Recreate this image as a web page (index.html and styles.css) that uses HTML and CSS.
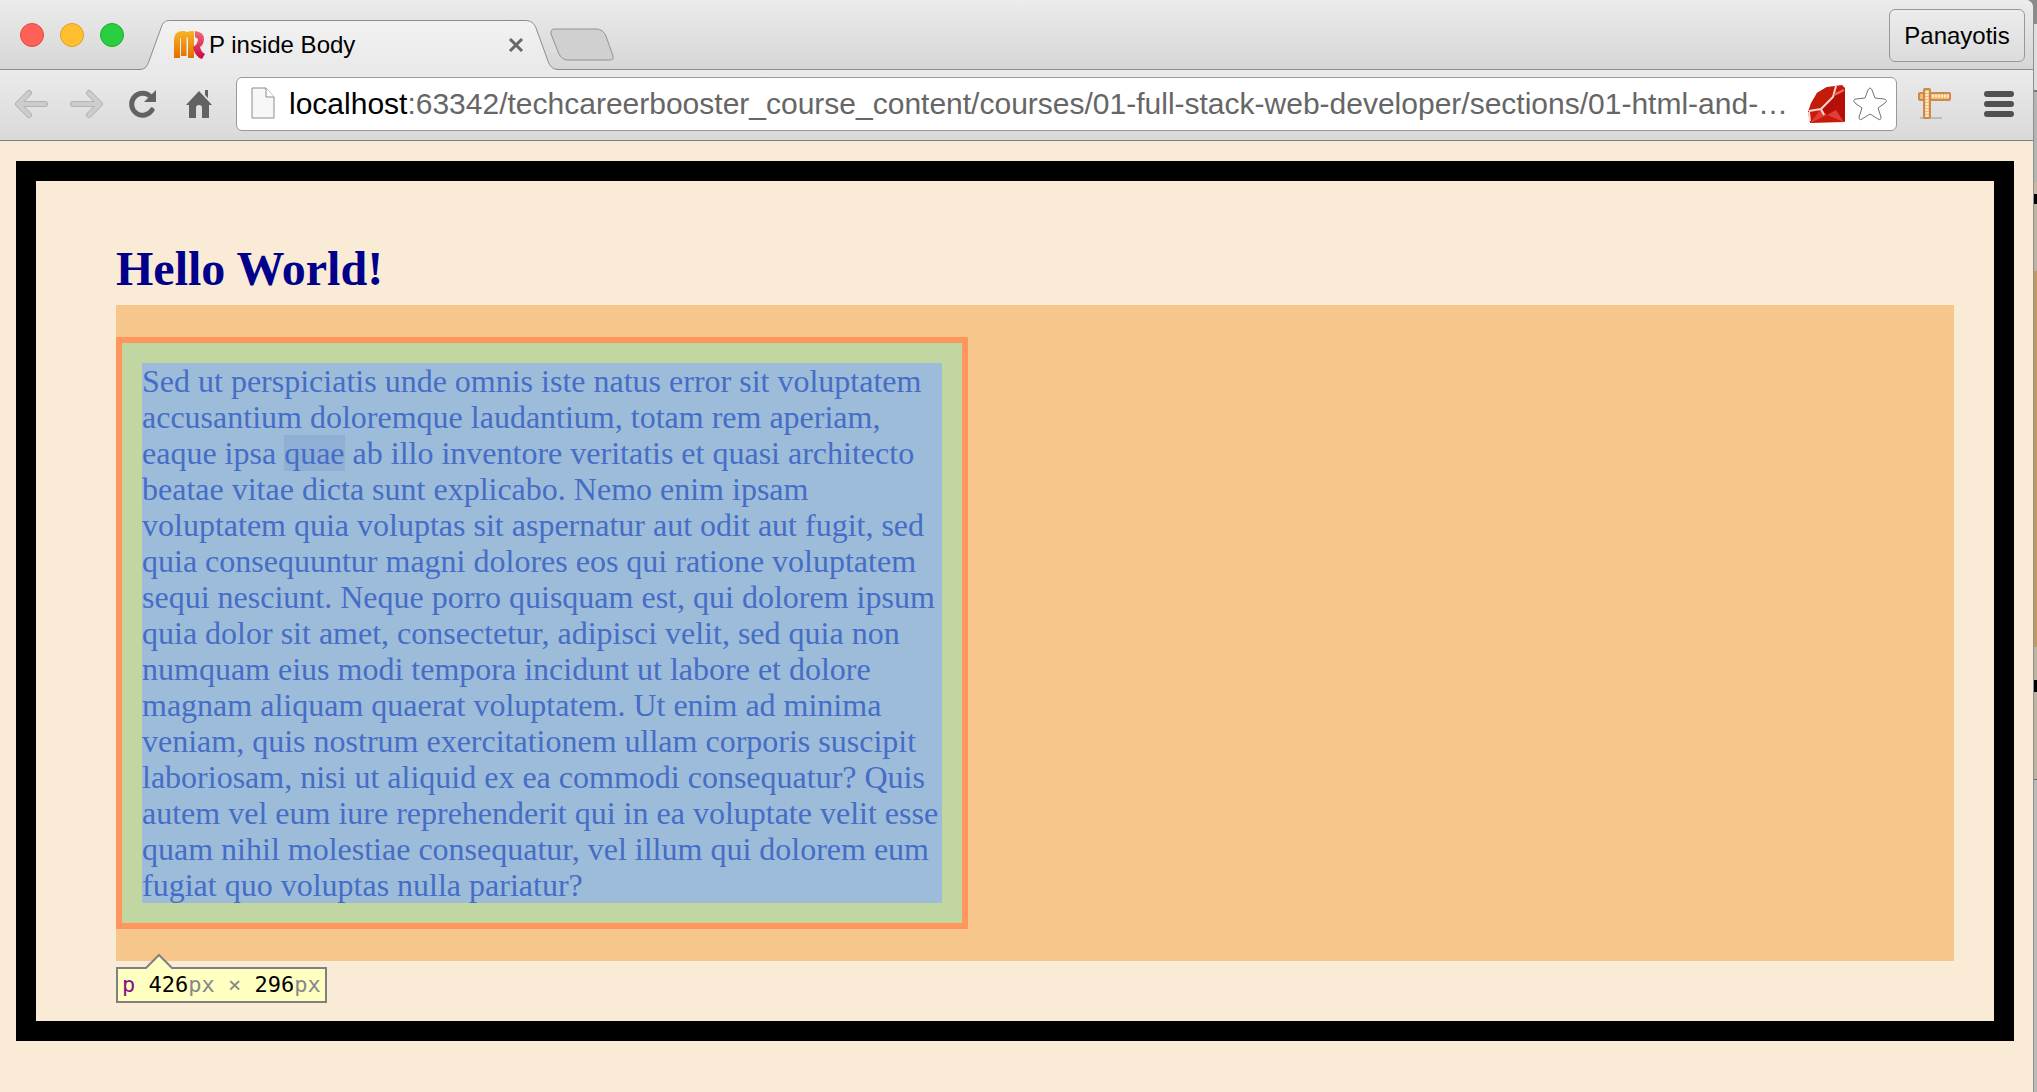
FILE: index.html
```html
<!DOCTYPE html>
<html lang="en">
<head>
<meta charset="utf-8">
<title>P inside Body</title>
<link rel="stylesheet" href="styles.css">
</head>
<body>
<div class="desktop">
<div class="window">
  <header class="tabstrip">
    <div class="lights">
      <button class="light red" aria-label="Close"></button>
      <button class="light yellow" aria-label="Minimize"></button>
      <button class="light green" aria-label="Zoom"></button>
    </div>
    <div class="tab">
      <svg class="tab-shape" width="418" height="50" viewBox="0 0 418 50" aria-hidden="true">
        <defs><linearGradient id="tabfill" x1="0" y1="0" x2="0" y2="1"><stop offset="0" stop-color="#f2f2f2"/><stop offset="1" stop-color="#e9e9e9"/></linearGradient></defs>
        <path d="M0 49.500C6 49 7 46 9 41L21 8C23 2 25 .5 30 .5H385C391 .5 394 3 396 8L408 41C410 46 412 49 418 49.500V50H0Z" fill="url(#tabfill)"/>
        <path d="M0 49.500C6 49 7 46 9 41L21 8C23 2 25 .5 30 .5H385C391 .5 394 3 396 8L408 41C410 46 412 49 418 49.500" fill="none" stroke="#8c8c8c"/>
      </svg>
      <svg class="favicon" width="31" height="28" viewBox="0 0 31 28" aria-hidden="true">
        <defs><linearGradient id="gold" x1="0" y1="0" x2="0" y2="1"><stop stop-color="#f9b325"/><stop offset="1" stop-color="#e26f00"/></linearGradient>
        <linearGradient id="rose" x1="0" y1="0" x2="0" y2="1"><stop stop-color="#f26a75"/><stop offset="1" stop-color="#cb0642"/></linearGradient></defs>
        <path d="M0 27V9Q0 0 9 0Q11 0 13 1Q15 0 20 0V27H14V9Q14 6 12.500 6V25H7V9Q7 6 6 7L6 27Z" fill="url(#gold)"/>
        <path d="M21 0Q30 1 30 8Q30 13 26 16Q27 21 31 23L28 28Q21 26 19 16Q24 13 24 8L21 6Z" fill="url(#rose)"/>
      </svg>
      <span class="tab-title">P inside Body</span>
      <button class="tab-close" aria-label="Close tab"><svg width="16" height="16" viewBox="0 0 16 16"><path d="M2 2L14 14M14 2L2 14" stroke="#666" stroke-width="3"/></svg></button>
    </div>
    <button class="newtab" aria-label="New tab"><svg width="64" height="34" viewBox="0 0 64 34"><path d="M5 1H46Q53 1 56 8L63 28Q64 32 60 32H18Q12 32 9 26L1 6Q0 1 5 1Z" fill="#d0d0d0" stroke="#929292"/></svg></button>
    <button class="profile">Panayotis</button>
  </header>
  <nav class="toolbar">
    <button class="nav" aria-label="Back"><svg width="34" height="30" viewBox="0 0 34 30"><path d="M15 4L4 15L15 26M5 15H31" fill="none" stroke="#b3b3b3" stroke-width="6" stroke-linecap="round" stroke-linejoin="round"/><path d="M15 4L4 15L15 26M5 15H31" fill="none" stroke="#cdcdcd" stroke-width="4" stroke-linecap="round" stroke-linejoin="round"/></svg></button>
    <button class="nav" aria-label="Forward"><svg width="34" height="30" viewBox="0 0 34 30"><path d="M19 4L30 15L19 26M29 15H3" fill="none" stroke="#b3b3b3" stroke-width="6" stroke-linecap="round" stroke-linejoin="round"/><path d="M19 4L30 15L19 26M29 15H3" fill="none" stroke="#cdcdcd" stroke-width="4" stroke-linecap="round" stroke-linejoin="round"/></svg></button>
    <button class="nav" aria-label="Reload"><svg width="34" height="30" viewBox="0 0 34 30"><path d="M26 21A11 11 0 1 1 24 7" fill="none" stroke="#626262" stroke-width="5" stroke-linecap="round"/><path d="M30 1V13H18Z" fill="#626262"/></svg></button>
    <button class="nav" aria-label="Home"><svg width="34" height="30" viewBox="0 0 34 30"><path d="M17 2L4 16H7V29H14V19Q14 16 17 16Q20 16 20 19V29H27V16H30L17 2ZM23 1H26V9L23 6Z" fill="#626262"/></svg></button>
    <div class="address">
      <svg width="24" height="34" viewBox="0 0 24 34" aria-hidden="true"><path d="M1 1H15L23 10V31H1Z" fill="#f7f7f7" stroke="#8b8b8b"/><path d="M15 1V10H23" fill="#fff" stroke="#8b8b8b"/></svg>
      <div class="url" role="textbox" aria-label="Address" contenteditable="true" spellcheck="false"><span class="host">localhost</span>:63342/techcareerbooster_course_content/courses/01-full-stack-web-developer/sections/01-html-and-…</div>
      <svg class="ruby" width="39" height="39" viewBox="0 0 39 39" aria-hidden="true"><path d="M1 27L4 18L10 8L20 2L35 0L38 3L37 37L3 38Z" fill="#c81a0b"/><path d="M4 20L10 8L20 2L28 2L26 11L14 23L4 25Z" fill="#c21d08"/><path d="M27 11L38 4V37L20 30L14 24Z" fill="#b50f08"/><path d="M14 24L3 38L20 30L37 37L29 25L20 30Z" fill="#e33d38"/><path d="M2 26L14 24L26 12L29 1M2 27L3 36M14 24L17 30" fill="none" stroke="#fbd5d0" stroke-width="2"/><path d="M27 10L37 5" stroke="#e8705f" stroke-width="2"/></svg>
      <button class="star" aria-label="Bookmark"><svg width="36" height="36" viewBox="0 0 36 36"><path d="M18 2Q19 2 20 4L23 12L32 13Q36 14 33 17L26 22L29 31Q29 35 26 33L18 28L10 33Q7 35 7 31L10 22L3 17Q0 14 4 13L13 12L16 4Q17 2 18 2Z" fill="#fff" stroke="#737373"/></svg></button>
    </div>
    <button class="tool" aria-label="Page ruler"><svg width="34" height="32" viewBox="0 0 34 32"><path d="M2 30H24" stroke="#bbb" stroke-width="2"/><rect x="1" y="5" width="31" height="7" rx="1" fill="#f0ba78" stroke="#c98a4b" stroke-width="2"/><rect x="6" y="1" width="6" height="29" rx="1" fill="#f0ba78" stroke="#c98a4b" stroke-width="2"/><path d="M14 8H31M9 3V29" stroke="#ffe9be" stroke-width="3" stroke-dasharray="2 1"/></svg></button>
    <button class="menu" aria-label="Menu"><svg width="30" height="27" viewBox="0 0 30 27"><path d="M3 3H27M3 13H27M3 23H27" stroke="#505050" stroke-width="6" stroke-linecap="round"/></svg></button>
  </nav>
  <main class="page">
    <section class="frame">
      <h1>Hello World!</h1>
      <div class="margin-box">
        <p class="copy">Sed ut perspiciatis unde omnis iste natus error sit voluptatem accusantium doloremque laudantium, totam rem aperiam, eaque ipsa <span class="selected">quae</span> ab illo inventore veritatis et quasi architecto beatae vitae dicta sunt explicabo. Nemo enim ipsam voluptatem quia voluptas sit aspernatur aut odit aut fugit, sed quia consequuntur magni dolores eos qui ratione voluptatem sequi nesciunt. Neque porro quisquam est, qui dolorem ipsum quia dolor sit amet, consectetur, adipisci velit, sed quia non numquam eius modi tempora incidunt ut labore et dolore magnam aliquam quaerat voluptatem. Ut enim ad minima veniam, quis nostrum exercitationem ullam corporis suscipit laboriosam, nisi ut aliquid ex ea commodi consequatur? Quis autem vel eum iure reprehenderit qui in ea voluptate velit esse quam nihil molestiae consequatur, vel illum qui dolorem eum fugiat quo voluptas nulla pariatur?</p>
        <div class="tooltip"><svg class="pointer" width="30" height="16" viewBox="0 0 30 16" aria-hidden="true"><path d="M1 16L15 2L29 16" fill="#ffffc2" stroke="#808080" stroke-width="2"/></svg><span class="tag">p</span> <b>426</b>px × <b>296</b>px</div>
      </div>
    </section>
  </main>
</div>
<div class="behind"></div>
</div>
</body>
</html>
```
FILE: styles.css
```css
* { box-sizing: border-box; }
body { margin: 0; background: #8a8a8a; font-family: "Liberation Sans", Arial, sans-serif; }
button { border: 0; padding: 0; background: none; font: inherit; }
svg { display: block; flex: none; }
.desktop { display: flex; min-height: 100vh; overflow: hidden; }
.window { flex: 1; min-width: 0; border-right: 1px solid #8f8f8f; border-top-right-radius: 8px; background: #faebd7; overflow: hidden; }
.behind {
  width: 3px;
  background: linear-gradient(
    #8a8a8a 24px, #dedede 24px 90px, #777 90px 92px, #b4b4b4 92px 182px,
    #c8b8a4 182px 194px, #000 194px 204px, #bdb3a2 204px 271px,
    #c09a61 271px 647px, #bdb3a2 647px 680px, #000 680px 692px,
    #bdb3a2 692px 779px, #666 779px 780px, #b9bbbd 780px);
}

.tabstrip { display: flex; height: 70px; padding-right: 8px; border-bottom: 1px solid #8c8c8c; background: linear-gradient(#ececec, #d6d6d6); }
.lights { display: flex; gap: 16px; width: 140px; padding: 23px 0 0 20px; }
.light { width: 24px; height: 24px; border-radius: 50%; border: 1px solid; }
.red { background: #ff6158; border-color: #e14942; }
.yellow { background: #ffbf2f; border-color: #dfa023; }
.green { background: #29ce41; border-color: #1aad2b; }
.tab { position: relative; display: flex; align-items: center; width: 418px; height: 50px; margin-top: 20px; padding: 0 34px; }
.tab-shape { position: absolute; left: 0; top: 0; }
.favicon, .tab-title, .tab-close { position: relative; }
.tab-title { flex: 1; margin-left: 4px; font-size: 24px; line-height: 28px; }
.newtab { height: 34px; margin: 28px 0 0 -8px; }
.profile { height: 53px; width: 136px; margin: 9px 0 0 auto; border: 1px solid #989898; border-radius: 6px; font-size: 24px; background: linear-gradient(#ececec, #dcdcdc); }

.toolbar { display: flex; align-items: center; height: 71px; padding: 0 19px 2px 14px; border-bottom: 1px solid #7d7d7d; background: linear-gradient(#ebebeb, #d9d9d9); }
.nav { width: 34px; margin-right: 22px; }
.address { display: flex; align-items: center; flex: 1; min-width: 0; height: 54px; margin-left: -2px; padding: 0 8px 0 14px; border: 1px solid #999; border-radius: 6px; background: #fff; }
.url { flex: 1; min-width: 0; margin-left: 14px; overflow: hidden; white-space: nowrap; color: #666; font-size: 30px; line-height: 36px; }
.host { color: #000; }
.star { margin-left: 6px; }
.tool { margin-left: 21px; }
.menu { margin-left: 32px; }

.page { padding: 20px 19px 50px 16px; background: #faebd7; }
.frame { padding: 60px 40px 60px 80px; border: 20px solid #000; }
h1 { margin: 0; padding-bottom: 8px; color: #00008b; font: bold 48px/56px "Liberation Serif", "Times New Roman", serif; }
.margin-box { position: relative; padding: 32px 0; background: #f7c68b; }
.copy { box-sizing: content-box; width: 800px; margin: 0; padding: 20px; border: 6px solid #ff965d; color: #466dc6; background: linear-gradient(#9cbcda, #9cbcda) content-box, #c2d6a2; font: 32px/36px "Liberation Serif", "Times New Roman", serif; }
.selected { display: inline-block; background: #8fafd4; }
.tooltip { position: absolute; left: 0; top: 662px; height: 36px; padding: 0 4px; border: 2px solid #808080; background: #ffffc2; color: #888; font: 22px/32px "DejaVu Sans Mono", monospace; white-space: nowrap; }
.tooltip b { color: #000; font-weight: normal; }
.tag { color: #881280; }
.pointer { position: absolute; left: 26px; top: -16px; }
```
